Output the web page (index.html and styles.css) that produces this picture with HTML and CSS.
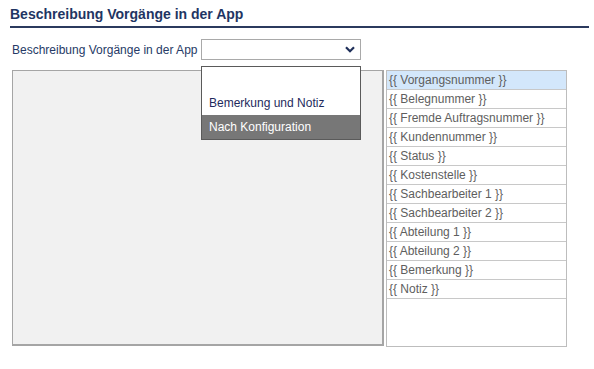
FILE: index.html
```html
<!DOCTYPE html>
<html lang="de">
<head>
<meta charset="utf-8">
<title>Beschreibung Vorgänge in der App</title>
<link rel="stylesheet" href="styles.css">
</head>
<body>
<div class="page">
  <h1 class="title">Beschreibung Vorgänge in der App</h1>
  <div class="row">
    <label class="label">Beschreibung Vorgänge in der App</label>
    <div class="select-wrap">
      <div class="select">
        <svg class="chev" width="10" height="7" viewBox="0 0 10 7"><path d="M1 1.2 L5 5.2 L9 1.2" fill="none" stroke="#1f2f5a" stroke-width="2.2"/></svg>
      </div>
      <div class="popup">
        <div class="opt"></div>
        <div class="opt">Bemerkung und Notiz</div>
        <div class="opt sel">Nach Konfiguration</div>
      </div>
    </div>
  </div>
  <div class="main">
    <div class="area"></div>
    <div class="list">
      <div class="item active">{{ Vorgangsnummer }}</div>
      <div class="item">{{ Belegnummer }}</div>
      <div class="item">{{ Fremde Auftragsnummer }}</div>
      <div class="item">{{ Kundennummer }}</div>
      <div class="item">{{ Status }}</div>
      <div class="item">{{ Kostenstelle }}</div>
      <div class="item">{{ Sachbearbeiter 1 }}</div>
      <div class="item">{{ Sachbearbeiter 2 }}</div>
      <div class="item">{{ Abteilung 1 }}</div>
      <div class="item">{{ Abteilung 2 }}</div>
      <div class="item">{{ Bemerkung }}</div>
      <div class="item">{{ Notiz }}</div>
    </div>
  </div>
</div>
</body>
</html>
```
FILE: styles.css
```css
html, body {
  margin: 0;
  padding: 0;
  background: #fff;
}
body {
  font-family: "Liberation Sans", Arial, sans-serif;
}
.page {
  padding: 6px 0 0 10px;
  width: 579px;
}
.title {
  margin: 0;
  font-size: 14px;
  line-height: 16px;
  font-weight: bold;
  color: #1f3563;
  padding-bottom: 4px;
  border-bottom: 2px solid #2b3a5e;
}
.row {
  display: flex;
  align-items: center;
  margin-top: 11px;
}
.label {
  font-size: 12px;
  color: #263a66;
  padding-left: 2px;
  width: 189px;
}
.select-wrap {
  position: relative;
}
.select {
  box-sizing: border-box;
  width: 160px;
  height: 21px;
  border: 1px solid #a9a9a9;
  background: #fff;
  display: flex;
  align-items: center;
  justify-content: flex-end;
  padding-right: 5px;
}
.chev {
  display: block;
}
.popup {
  position: absolute;
  left: 0;
  top: 27px;
  box-sizing: border-box;
  width: 160px;
  background: #fff;
  border: 1px solid #5a5a5a;
  z-index: 5;
}
.opt {
  height: 24px;
  line-height: 24px;
  font-size: 12px;
  color: #1e2a5c;
  padding-left: 7px;
}
.sel {
  background: #777;
  color: #fff;
}
.main {
  display: flex;
  gap: 2px;
  margin-top: 10px;
  padding-left: 2px;
}
.area {
  box-sizing: border-box;
  width: 372px;
  height: 276px;
  background: #f1f1f1;
  border: 1px solid #a5a5a5;
  border-right-width: 2px;
  border-bottom-width: 2px;
}
.list {
  box-sizing: border-box;
  width: 181px;
  height: 277px;
  border: 1px solid #bdbdbd;
  background: #fff;
}
.item {
  height: 18px;
  line-height: 18px;
  border-bottom: 1px solid #c8c8c8;
  font-size: 12px;
  color: #5e5e5e;
  padding-left: 2px;
  white-space: nowrap;
}
.active {
  background: #d3e7fb;
}
```
